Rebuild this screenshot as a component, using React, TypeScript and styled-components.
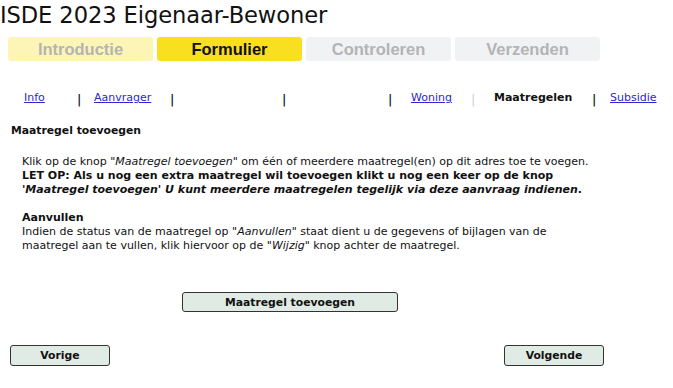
import React from 'react';
import styled, { createGlobalStyle } from 'styled-components';

const GlobalStyle = createGlobalStyle`
  html, body {
    margin: 0;
    padding: 0;
    background: #ffffff;
  }
  body {
    font-family: 'DejaVu Sans', Verdana, sans-serif;
    color: #111;
  }
`;

const Page = styled.div`
  width: 673px;
  height: 388px;
  overflow: hidden;
  display: flex;
  flex-direction: column;
`;

const Title = styled.h1`
  margin: 0;
  padding: 0;
  font-family: 'DejaVu Sans', Verdana, sans-serif;
  font-weight: 400;
  font-size: 22.6px;
  line-height: 30px;
  color: #111;
  letter-spacing: -0.1px;
`;

const Steps = styled.div`
  display: flex;
  gap: 4px;
  margin: 7px 0 0 8px;
`;

type StepState = 'done' | 'active' | 'todo';

const stepBg: Record<StepState, string> = {
  done: '#fdf5b5',
  active: '#f8e020',
  todo: '#f1f2f4',
};

const Step = styled.div<{ $state: StepState }>`
  width: 145px;
  height: 24px;
  border-radius: 3px;
  background: ${({ $state }) => stepBg[$state]};
  color: ${({ $state }) => ($state === 'active' ? '#111' : '#b4b4b4')};
  font-family: 'Liberation Sans', Arial, sans-serif;
  font-weight: 700;
  font-size: 16.5px;
  display: flex;
  align-items: center;
  justify-content: center;
`;

const Nav = styled.div`
  display: flex;
  align-items: flex-start;
  margin: 30px 0 0 24px;
  height: 20px;
  font-family: 'DejaVu Sans', Verdana, sans-serif;
  font-size: 11px;
`;

const NavCell = styled.div<{ $w: number }>`
  width: ${({ $w }) => $w}px;
  flex-shrink: 0;
  line-height: 13px;
`;

const NavLink = styled.a`
  color: #2a2ad0;
  text-decoration: underline;
  cursor: pointer;
`;

const NavCurrent = styled.span`
  font-weight: 700;
  color: #111;
`;

const Sep = styled.div<{ $w: number; $light?: boolean }>`
  width: ${({ $w }) => $w}px;
  flex-shrink: 0;
  margin-top: 2px;
  font-size: 13px;
  line-height: 14px;
  color: ${({ $light }) => ($light ? '#d0d0d0' : '#000')};
`;

const Content = styled.div`
  padding: 0 0 0 11px;
  font-size: 11px;
`;

const SectionTitle = styled.div`
  font-weight: 700;
  margin-top: 13px;
  line-height: 14px;
  font-size: 10.8px;
`;

const Body = styled.div`
  margin: 17px 0 0 11px;
  line-height: 14px;
`;

const Para = styled.p`
  margin: 0 0 14px 0;
`;

const ButtonRow = styled.div<{ $justify: string }>`
  display: flex;
  justify-content: ${({ $justify }) => $justify};
`;

const Button = styled.button<{ $w: number; $h: number }>`
  width: ${({ $w }) => $w}px;
  height: ${({ $h }) => $h}px;
  padding: 0;
  border: 1px solid #333;
  border-radius: 3px;
  background: #e0ebe5;
  font-family: 'DejaVu Sans', Verdana, sans-serif;
  font-weight: 700;
  font-size: 10.8px;
  color: #111;
  cursor: pointer;
`;

const AddRow = styled(ButtonRow)`
  margin: 25px 0 0 182px;
`;

const FooterRow = styled(ButtonRow)`
  margin: 33px 0 0 10px;
  width: 594px;
`;

const navItems: { label: string; w: number; sep?: number; current?: boolean; light?: boolean }[] = [
  { label: 'Info', w: 53, sep: 17 },
  { label: 'Aanvrager', w: 76, sep: 17 },
  { label: '', w: 95, sep: 17 },
  { label: '', w: 89, sep: 23 },
  { label: 'Woning', w: 60, sep: 23, light: true },
  { label: 'Maatregelen', w: 98, sep: 18, current: true },
  { label: 'Subsidie', w: 60 },
];

export default function App() {
  return (
    <Page>
      <GlobalStyle />
      <Title>ISDE 2023 Eigenaar-Bewoner</Title>
      <Steps>
        <Step $state="done">Introductie</Step>
        <Step $state="active">Formulier</Step>
        <Step $state="todo">Controleren</Step>
        <Step $state="todo">Verzenden</Step>
      </Steps>

      <Nav>
        {navItems.map((item, i) => (
          <React.Fragment key={i}>
            <NavCell $w={item.w}>
              {item.current ? (
                <NavCurrent>{item.label}</NavCurrent>
              ) : item.label ? (
                <NavLink>{item.label}</NavLink>
              ) : null}
            </NavCell>
            {item.sep && (
              <Sep $w={item.sep} $light={item.light}>
                |
              </Sep>
            )}
          </React.Fragment>
        ))}
      </Nav>

      <Content>
        <SectionTitle>Maatregel toevoegen</SectionTitle>
        <Body>
          <Para>
            Klik op de knop <i>"Maatregel toevoegen"</i> om één of meerdere maatregel(en) op dit adres toe te voegen.
            <br />
            <b>
              LET OP: Als u nog een extra maatregel wil toevoegen klikt u nog een keer op de knop
              <br />
              <i>'Maatregel toevoegen'</i> <i>U kunt meerdere maatregelen tegelijk via deze aanvraag indienen</i>.
            </b>
          </Para>
          <Para>
            <b>Aanvullen</b>
            <br />
            Indien de status van de maatregel op <i>"Aanvullen"</i> staat dient u de gegevens of bijlagen van de
            <br />
            maatregel aan te vullen, klik hiervoor op de <i>"Wijzig"</i> knop achter de maatregel.
          </Para>
        </Body>
      </Content>

      <AddRow $justify="flex-start">
        <Button $w={216} $h={20}>Maatregel toevoegen</Button>
      </AddRow>

      <FooterRow $justify="space-between">
        <Button $w={100} $h={21}>Vorige</Button>
        <Button $w={100} $h={21}>Volgende</Button>
      </FooterRow>
    </Page>
  );
}
